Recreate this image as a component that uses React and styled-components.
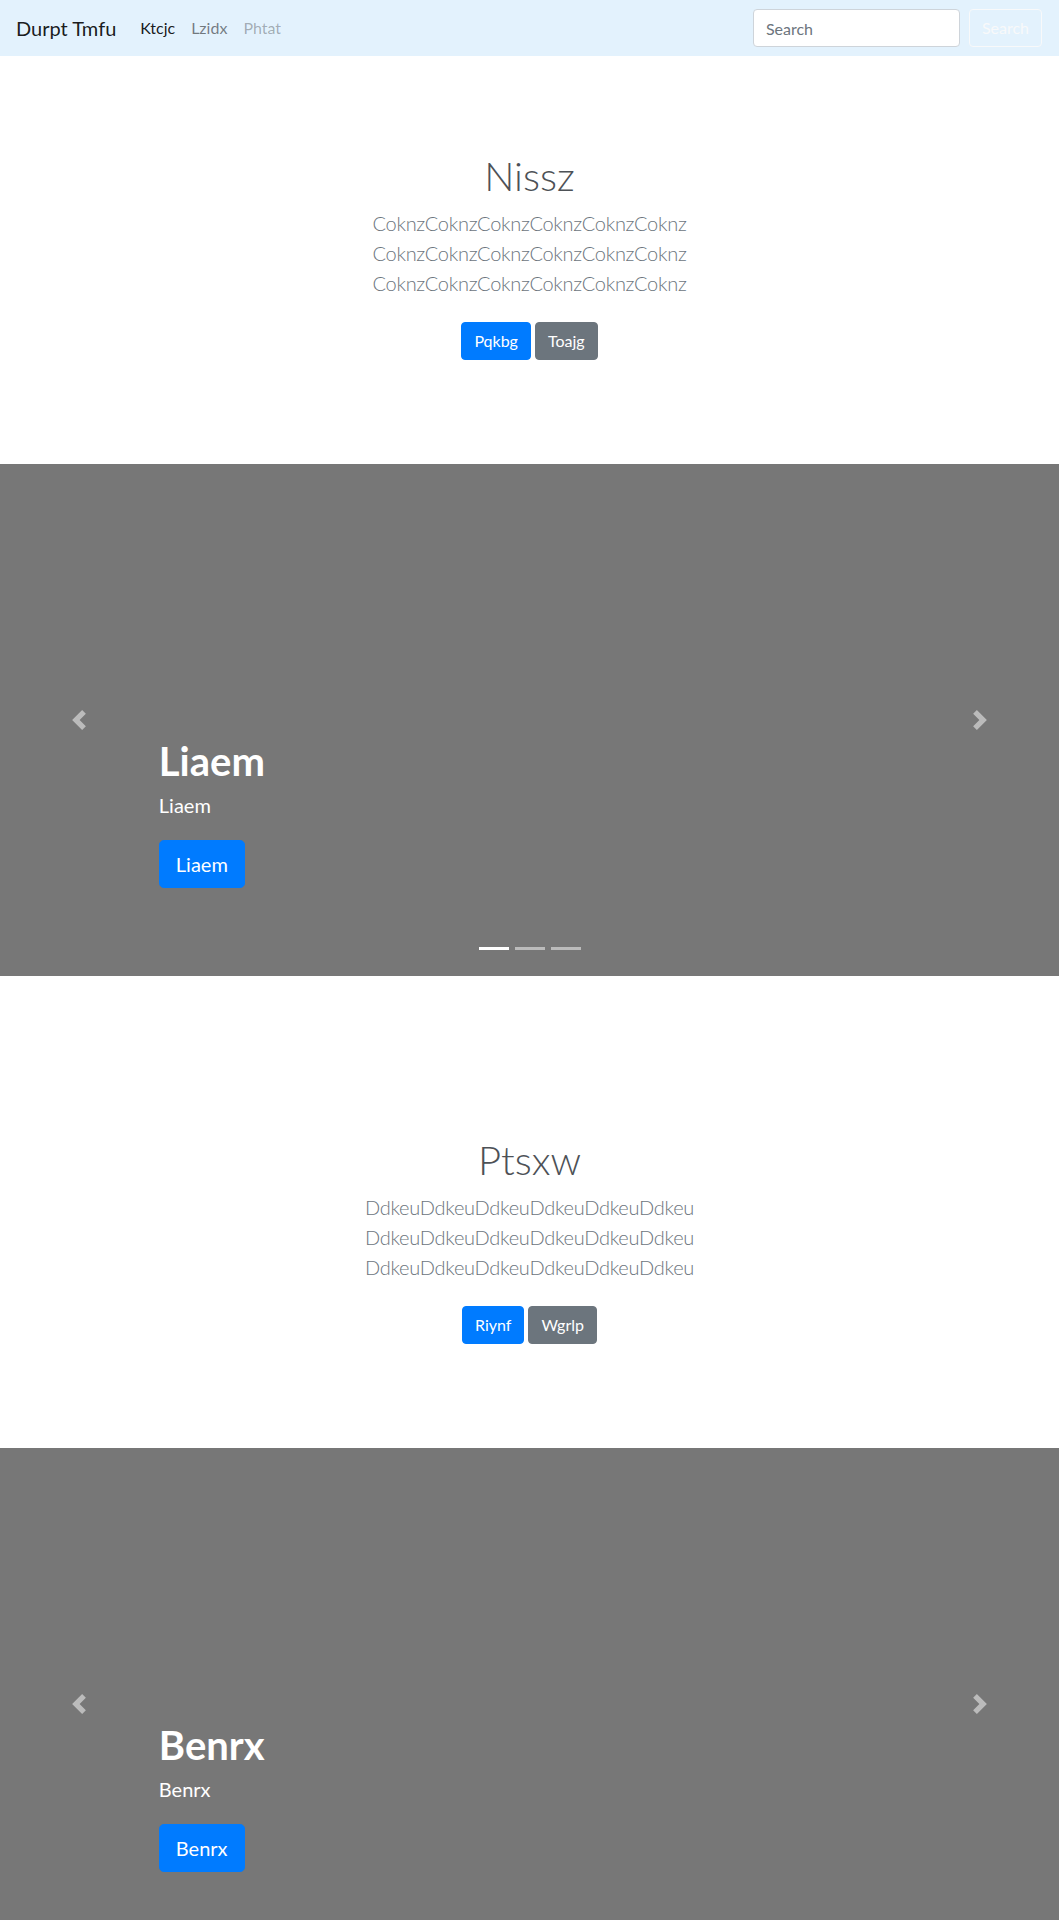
import React from "react";
import styled, { createGlobalStyle } from "styled-components";

const GlobalStyle = createGlobalStyle`
  html, body { margin: 0; padding: 0; }
  body {
    font-family: Lato, "Open Sans", Arial, sans-serif;
    font-size: 16px;
    line-height: 1.5;
    color: #212529;
    background: #fff;
  }
  * { box-sizing: border-box; }
`;

const Navbar = styled.nav`
  display: flex;
  align-items: center;
  justify-content: space-between;
  height: 56px;
  padding: 8px 17px 8px 16px;
  background: #e3f2fd;
`;

const NavLeft = styled.div`
  display: flex;
  align-items: center;
`;

const Brand = styled.a`
  font-size: 20px;
  line-height: 30px;
  padding: 5px 0;
  margin-right: 16px;
  color: rgba(0, 0, 0, 0.9);
  text-decoration: none;
`;

const NavLinks = styled.div`
  display: flex;
  align-items: center;
`;

const NavLink = styled.a`
  padding: 8px;
  font-size: 16px;
  line-height: 24px;
  text-decoration: none;
  color: ${(p) =>
    p.$state === "active"
      ? "rgba(0,0,0,0.9)"
      : p.$state === "disabled"
      ? "rgba(0,0,0,0.3)"
      : "rgba(0,0,0,0.5)"};
`;

const SearchForm = styled.form`
  display: flex;
  align-items: center;
  gap: 9px;
`;

const SearchInput = styled.input`
  width: 207px;
  height: 38px;
  padding: 6px 12px;
  font-family: inherit;
  font-size: 16px;
  color: #495057;
  background: #fff;
  border: 1px solid #ced4da;
  border-radius: 4px;
  outline: none;
  &::placeholder { color: #6c757d; }
`;

const OutlineLightButton = styled.button`
  height: 38px;
  padding: 6px 12px;
  font-family: inherit;
  font-size: 16px;
  line-height: 24px;
  color: #f8f9fa;
  background: transparent;
  border: 1px solid #f8f9fa;
  border-radius: 4px;
`;

const Jumbo = styled.section`
  text-align: center;
  padding: ${(p) => p.$top}px 16px 96px;
`;

const JumboTitle = styled.h1`
  margin: 0 0 8px;
  font-size: 40px;
  line-height: 48px;
  font-weight: 300;
  color: #4d5156;
`;

const Lead = styled.p`
  margin: 0;
  padding-bottom: 16px;
  font-size: 20px;
  line-height: 30px;
  font-weight: 300;
  letter-spacing: -0.28px;
  color: #6c757d;
`;

const ButtonRow = styled.div`
  display: flex;
  justify-content: center;
  gap: 4px;
  padding: 8px 0;
`;

const Btn = styled.a`
  display: inline-block;
  padding: ${(p) => (p.$lg ? "8px 16px" : "6px 12px")};
  font-size: ${(p) => (p.$lg ? "20px" : "16px")};
  line-height: ${(p) => (p.$lg ? "30px" : "24px")};
  border-radius: ${(p) => (p.$lg ? "4.8px" : "4px")};
  border: 1px solid ${(p) => (p.$variant === "secondary" ? "#6c757d" : "#007bff")};
  background: ${(p) => (p.$variant === "secondary" ? "#6c757d" : "#007bff")};
  color: #fff;
  text-decoration: none;
  cursor: pointer;
`;

const Carousel = styled.section`
  position: relative;
  height: 512px;
  background: #777;
  overflow: hidden;
`;

const Slide = styled.div`
  height: 100%;
  display: flex;
  flex-direction: column;
  justify-content: flex-end;
  padding: 0 15% 88px;
  color: #fff;
`;

const CaptionTitle = styled.h2`
  margin: 0 0 8px;
  font-size: 40px;
  line-height: 48px;
  font-weight: 700;
`;

const CaptionText = styled.p`
  margin: 0 0 23px;
  font-size: 20px;
  line-height: 24px;
`;

const CaptionAction = styled.div`
  display: flex;
`;

const Control = styled.a`
  position: absolute;
  top: 0;
  bottom: 0;
  ${(p) => (p.$side === "prev" ? "left: 0;" : "right: 0;")}
  width: 15%;
  display: flex;
  align-items: center;
  justify-content: center;
  opacity: 0.5;
  color: #fff;
`;

const Indicators = styled.ol`
  position: absolute;
  left: 0;
  right: 0;
  bottom: 0;
  margin: 0 0 16px;
  padding: 0;
  list-style: none;
  display: flex;
  justify-content: center;
`;

const Indicator = styled.li`
  width: 30px;
  height: 3px;
  margin: 10px 3px;
  background: #fff;
  opacity: ${(p) => (p.$active ? 1 : 0.5)};
`;

const PrevIcon = () => (
  <svg width="20" height="20" viewBox="0 0 8 8" fill="#fff">
    <path d="M5.25 0l-4 4 4 4 1.5-1.5L4.25 4l2.5-2.5L5.25 0z" />
  </svg>
);

const NextIcon = () => (
  <svg width="20" height="20" viewBox="0 0 8 8" fill="#fff">
    <path d="M2.75 0l-1.5 1.5L3.75 4l-2.5 2.5L2.75 8l4-4-4-4z" />
  </svg>
);

const Hero = ({ top, title, word, primary, secondary }) => (
  <Jumbo $top={top}>
    <JumboTitle>{title}</JumboTitle>
    <Lead>
      {word.repeat(6)}
      <br />
      {word.repeat(6)}
      <br />
      {word.repeat(6)}
    </Lead>
    <ButtonRow>
      <Btn>{primary}</Btn>
      <Btn $variant="secondary">{secondary}</Btn>
    </ButtonRow>
  </Jumbo>
);

const CarouselBlock = ({ label }) => (
  <Carousel>
    <Slide>
      <CaptionTitle>{label}</CaptionTitle>
      <CaptionText>{label}</CaptionText>
      <CaptionAction>
        <Btn $lg>{label}</Btn>
      </CaptionAction>
    </Slide>
    <Indicators>
      <Indicator $active />
      <Indicator />
      <Indicator />
    </Indicators>
    <Control $side="prev">
      <PrevIcon />
    </Control>
    <Control $side="next">
      <NextIcon />
    </Control>
  </Carousel>
);

export default function App() {
  return (
    <>
      <GlobalStyle />
      <Navbar>
        <NavLeft>
          <Brand>Durpt Tmfu</Brand>
          <NavLinks>
            <NavLink $state="active">Ktcjc</NavLink>
            <NavLink>Lzidx</NavLink>
            <NavLink $state="disabled">Phtat</NavLink>
          </NavLinks>
        </NavLeft>
        <SearchForm onSubmit={(e) => e.preventDefault()}>
          <SearchInput type="search" placeholder="Search" />
          <OutlineLightButton type="submit">Search</OutlineLightButton>
        </SearchForm>
      </Navbar>
      <Hero top={96} title="Nissz" word="Coknz" primary="Pqkbg" secondary="Toajg" />
      <CarouselBlock label="Liaem" />
      <Hero top={160} title="Ptsxw" word="Ddkeu" primary="Riynf" secondary="Wgrlp" />
      <CarouselBlock label="Benrx" />
    </>
  );
}
